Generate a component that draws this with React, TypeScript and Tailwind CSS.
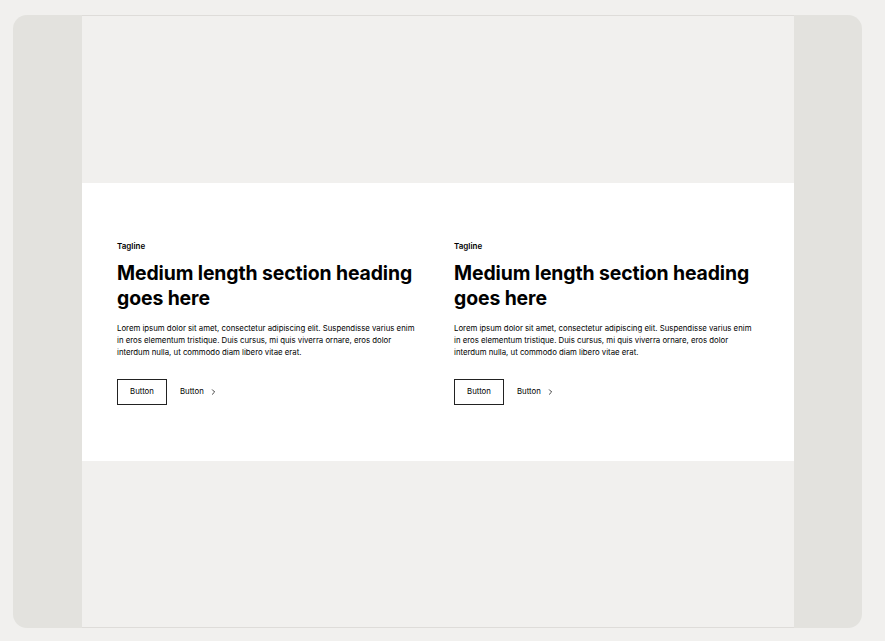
import { ChevronRight } from "lucide-react"

function Column() {
  return (
    <div className="flex flex-col">
      <p className="text-[8px] leading-[10px] font-semibold text-black">Tagline</p>
      <h2 className="mt-[10px] text-[19.4px] leading-[25px] font-bold tracking-[-0.1px] text-black">
        Medium length section heading goes here
      </h2>
      <p className="mt-[11px] text-[7.8px] leading-[12px] text-black">
        Lorem ipsum dolor sit amet, consectetur adipiscing elit. Suspendisse varius enim in eros elementum tristique. Duis cursus, mi quis viverra ornare, eros dolor interdum nulla, ut commodo diam libero vitae erat.
      </p>
      <div className="mt-[21px] flex items-center gap-[13px]">
        <button className="h-[26px] w-[50px] border border-[#222] text-[7.8px] leading-none text-black">Button</button>
        <button className="flex items-center gap-[5px] text-[7.8px] leading-none text-black">
          <span>Button</span>
          <ChevronRight className="h-[9px] w-[9px] -translate-y-[0.5px]" strokeWidth={2} />
        </button>
      </div>
    </div>
  )
}

export default function App() {
  return (
    <div
      className="h-[641px] w-[885px] bg-[#f1f0ee] pl-[13px] pr-[23px] pt-[15px] pb-[13px]"
      style={{ fontFamily: "Inter, 'Liberation Sans', sans-serif" }}
    >
      <div className="flex h-full overflow-hidden rounded-[14px] bg-[#e3e2de]">
        <div className="w-[69px] shrink-0" />
        <div className="flex flex-1 flex-col border-y border-[#dedcd9] bg-[#f1f0ee]">
          <div className="h-[167px]" />
          <section className="grid h-[278px] grid-cols-2 gap-[32px] bg-white px-[35px] pt-[58px]">
            <Column />
            <Column />
          </section>
          <div className="flex-1" />
        </div>
        <div className="w-[68px] shrink-0" />
      </div>
    </div>
  )
}
